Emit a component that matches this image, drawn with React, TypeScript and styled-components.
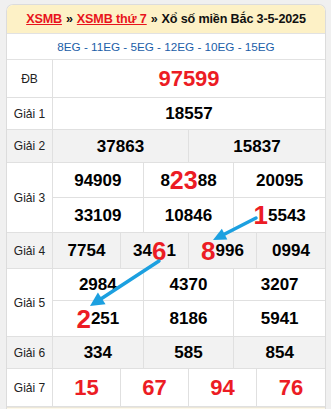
import React from "react";
import styled, { createGlobalStyle } from "styled-components";

const Global = createGlobalStyle`
  html, body { margin: 0; padding: 0; background: #f0f0f0; }
  body { font-family: "Liberation Sans", Arial, sans-serif; }
`;

const Page = styled.div`
  position: relative;
  width: 331px;
  height: 409px;
  overflow: hidden;
  padding: 4px 5px 0 6px;
  box-sizing: border-box;
`;

const Box = styled.div`
  border: 1px solid #dcdcdc;
  border-bottom: none;
  border-radius: 7px 7px 0 0;
  background: #fff;
  overflow: hidden;
`;

const Header = styled.div`
  height: 28px;
  background: #fdf1c6;
  border-bottom: 1px solid #e2e2e2;
  display: flex;
  align-items: center;
  justify-content: center;
  font-size: 12.6px;
  font-weight: bold;
  color: #111;
  white-space: nowrap;
  letter-spacing: -0.15px;
`;

const Link = styled.a`
  color: #e8141c;
  text-decoration: underline;
`;

const Sep = styled.span`
  margin: 0 4px;
`;

const Codes = styled.div`
  height: 25px;
  border-bottom: 1px solid #e2e2e2;
  display: flex;
  align-items: center;
  justify-content: center;
  font-size: 11.7px;
  color: #1a5ea8;
`;

const Row = styled.div<{ $alt?: boolean }>`
  display: grid;
  grid-template-columns: 46px 1fr;
  background: ${(p) => (p.$alt ? "#f2f2f2" : "#fff")};
  border-bottom: 1px solid #e0e0e0;
`;

const Label = styled.div`
  border-right: 1px solid #e0e0e0;
  display: flex;
  align-items: center;
  justify-content: center;
  font-size: 12px;
  color: #222;
`;

const Values = styled.div`
  display: flex;
  flex-direction: column;
`;

const SubRow = styled.div<{ $cols: number; $h: number }>`
  display: grid;
  grid-template-columns: repeat(${(p) => p.$cols}, 1fr);
  height: ${(p) => p.$h}px;
  & + & {
    border-top: 1px solid #e0e0e0;
  }
`;

const Cell = styled.div<{ $size?: number; $red?: boolean }>`
  display: flex;
  align-items: center;
  justify-content: center;
  border-right: 1px solid #e0e0e0;
  font-size: ${(p) => p.$size ?? 17}px;
  font-weight: bold;
  color: ${(p) => (p.$red ? "#ec1c24" : "#000")};
  line-height: 1;
  white-space: nowrap;
  &:last-child {
    border-right: none;
  }
`;

const Big = styled.span<{ $size?: number }>`
  color: #ec1c24;
  font-size: ${(p) => p.$size ?? 26}px;
  line-height: 1;
`;

const Footer = styled.div`
  height: 6px;
  background: #fdf8ea;
  border-top: 1px solid #ebe6d8;
`;

const Overlay = styled.svg`
  position: absolute;
  left: 0;
  top: 0;
  pointer-events: none;
`;

type Num = React.ReactNode;

const Prize = ({
  label,
  rows,
  alt,
  size,
  red,
}: {
  label: string;
  rows: { h: number; items: Num[] }[];
  alt?: boolean;
  size?: number;
  red?: boolean;
}) => (
  <Row $alt={alt}>
    <Label>{label}</Label>
    <Values>
      {rows.map((r, i) => (
        <SubRow key={i} $cols={r.items.length} $h={r.h}>
          {r.items.map((it, j) => (
            <Cell key={j} $size={size} $red={red}>
              {it}
            </Cell>
          ))}
        </SubRow>
      ))}
    </Values>
  </Row>
);

const Arrow = ({ x1, y1, x2, y2, len, half }: { x1: number; y1: number; x2: number; y2: number; len: number; half: number }) => {
  const dx = x2 - x1;
  const dy = y2 - y1;
  const L = Math.hypot(dx, dy);
  const ux = dx / L;
  const uy = dy / L;
  const bx = x2 - ux * len;
  const by = y2 - uy * len;
  const nx = -uy;
  const ny = ux;
  const pts = `${x2},${y2} ${bx + nx * half},${by + ny * half} ${bx - nx * half},${by - ny * half}`;
  return (
    <g>
      <line x1={x1} y1={y1} x2={bx + ux * 2} y2={by + uy * 2} stroke="#1ca0e0" strokeWidth={3.5} strokeLinecap="round" />
      <polygon points={pts} fill="#1ca0e0" />
    </g>
  );
};

export default function App() {
  return (
    <>
      <Global />
      <Page>
        <Box>
          <Header>
            <Link href="#">XSMB</Link>
            <Sep>»</Sep>
            <Link href="#">XSMB thứ 7</Link>
            <Sep>»</Sep>
            <span>Xổ số miền Bắc 3-5-2025</span>
          </Header>
          <Codes>8EG - 11EG - 5EG - 12EG - 10EG - 15EG</Codes>
          <Prize label="ĐB" size={22} red rows={[{ h: 37, items: ["97599"] }]} />
          <Prize label="Giải 1" rows={[{ h: 31, items: ["18557"] }]} />
          <Prize label="Giải 2" alt rows={[{ h: 32, items: ["37863", "15837"] }]} />
          <Prize
            label="Giải 3"
            rows={[
              {
                h: 34,
                items: [
                  "94909",
                  <>
                    8<Big $size={25}>23</Big>88
                  </>,
                  "20095",
                ],
              },
              {
                h: 34,
                items: [
                  "33109",
                  "10846",
                  <>
                    <Big>1</Big>5543
                  </>,
                ],
              },
            ]}
          />
          <Prize
            label="Giải 4"
            alt
            rows={[
              {
                h: 35,
                items: [
                  "7754",
                  <>
                    34<Big>6</Big>1
                  </>,
                  <>
                    <Big>8</Big>996
                  </>,
                  "0994",
                ],
              },
            ]}
          />
          <Prize
            label="Giải 5"
            rows={[
              { h: 31, items: ["2984", "4370", "3207"] },
              {
                h: 35,
                items: [
                  <>
                    <Big>2</Big>251
                  </>,
                  "8186",
                  "5941",
                ],
              },
            ]}
          />
          <Prize label="Giải 6" alt rows={[{ h: 31, items: ["334", "585", "854"] }]} />
          <Prize label="Giải 7" size={22} red rows={[{ h: 37, items: ["15", "67", "94", "76"] }]} />
          <Footer />
        </Box>
        <Overlay width={331} height={409} viewBox="0 0 331 409">
          <Arrow x1={256} y1={218} x2={213} y2={240} len={13} half={6} />
          <Arrow x1={159} y1={261} x2={90} y2={306} len={14} half={7} />
        </Overlay>
      </Page>
    </>
  );
}
